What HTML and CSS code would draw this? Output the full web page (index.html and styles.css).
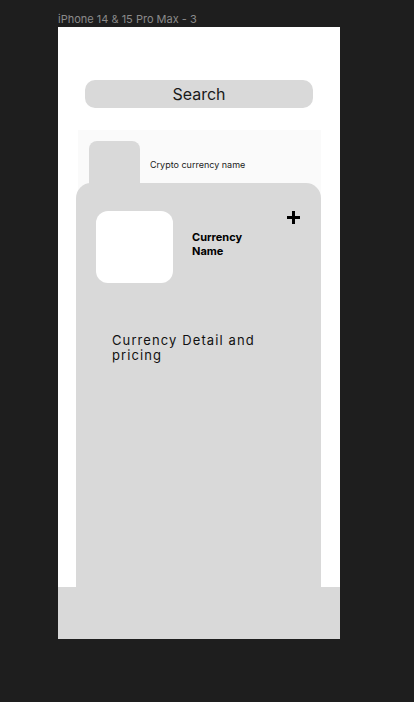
FILE: index.html
```html
<!DOCTYPE html>
<html>
<head>
<meta charset="utf-8">
<link rel="stylesheet" href="styles.css">
</head>
<body>
<div class="canvas">
  <div class="frame-label">iPhone 14 &amp; 15 Pro Max - 3</div>
  <div class="frame">
    <div class="search">Search</div>
    <div class="list-item">
      <div class="thumb"></div>
      <div class="item-name">Crypto currency name</div>
    </div>
    <div class="sheet">
      <div class="sheet-head">
        <div class="logo-box"></div>
        <div class="currency-name">Currency<br>Name</div>
        <svg class="plus" width="13" height="13" viewBox="0 0 13 13"><rect x="5" y="0" width="3" height="13" fill="#000"/><rect x="0" y="5" width="13" height="3" fill="#000"/></svg>
      </div>
      <div class="detail">Currency Detail and pricing</div>
    </div>
    <div class="bottom-bar"></div>
  </div>
</div>
</body>
</html>
```
FILE: styles.css
```css
html, body {
  margin: 0;
  padding: 0;
  background: #1e1e1e;
  font-family: Inter, "Noto Sans", sans-serif;
}
.canvas {
  width: 414px;
  height: 702px;
  padding: 12px 0 0 58px;
  box-sizing: border-box;
}
.frame-label {
  font-size: 11px;
  line-height: 14px;
  color: #8a8a8a;
  height: 15px;
}
.frame {
  position: relative;
  width: 282px;
  height: 612px;
  background: #ffffff;
  overflow: hidden;
  padding-top: 53px;
  box-sizing: border-box;
}
.search {
  margin-left: 27px;
  width: 228px;
  height: 28px;
  border-radius: 10px;
  background: #d9d9d9;
  font-size: 16px;
  line-height: 28px;
  text-align: center;
  color: #1a1a1a;
}
.list-item {
  margin: 22px 0 0 20px;
  width: 243px;
  height: 142px;
  background: #fafafa;
  display: flex;
  align-items: flex-start;
  padding: 11px 0 0 11px;
  box-sizing: border-box;
}
.thumb {
  width: 51px;
  height: 60px;
  border-radius: 8px;
  background: #d9d9d9;
  flex: none;
}
.item-name {
  margin: 18px 0 0 10px;
  font-size: 9px;
  line-height: 12px;
  color: #1a1a1a;
}
.sheet {
  position: absolute;
  left: 18px;
  top: 156px;
  width: 245px;
  height: 470px;
  background: #d9d9d9;
  border-radius: 15px 15px 0 0;
  padding: 28px 21px 0 20px;
  box-sizing: border-box;
}
.sheet-head {
  display: flex;
  align-items: flex-start;
}
.logo-box {
  width: 77px;
  height: 72px;
  border-radius: 12px;
  background: #ffffff;
  flex: none;
}
.currency-name {
  margin: 19px 0 0 19px;
  font-size: 11px;
  line-height: 14px;
  font-weight: 700;
  color: #000;
  flex: 1;
}
.plus {
  flex: none;
  display: block;
}
.detail {
  margin: 50px 0 0 16px;
  width: 160px;
  font-size: 13px;
  line-height: 15px;
  letter-spacing: 1.1px;
  color: #111;
}
.bottom-bar {
  position: absolute;
  left: 0;
  bottom: 0;
  width: 100%;
  height: 52px;
  background: #d9d9d9;
}
```
